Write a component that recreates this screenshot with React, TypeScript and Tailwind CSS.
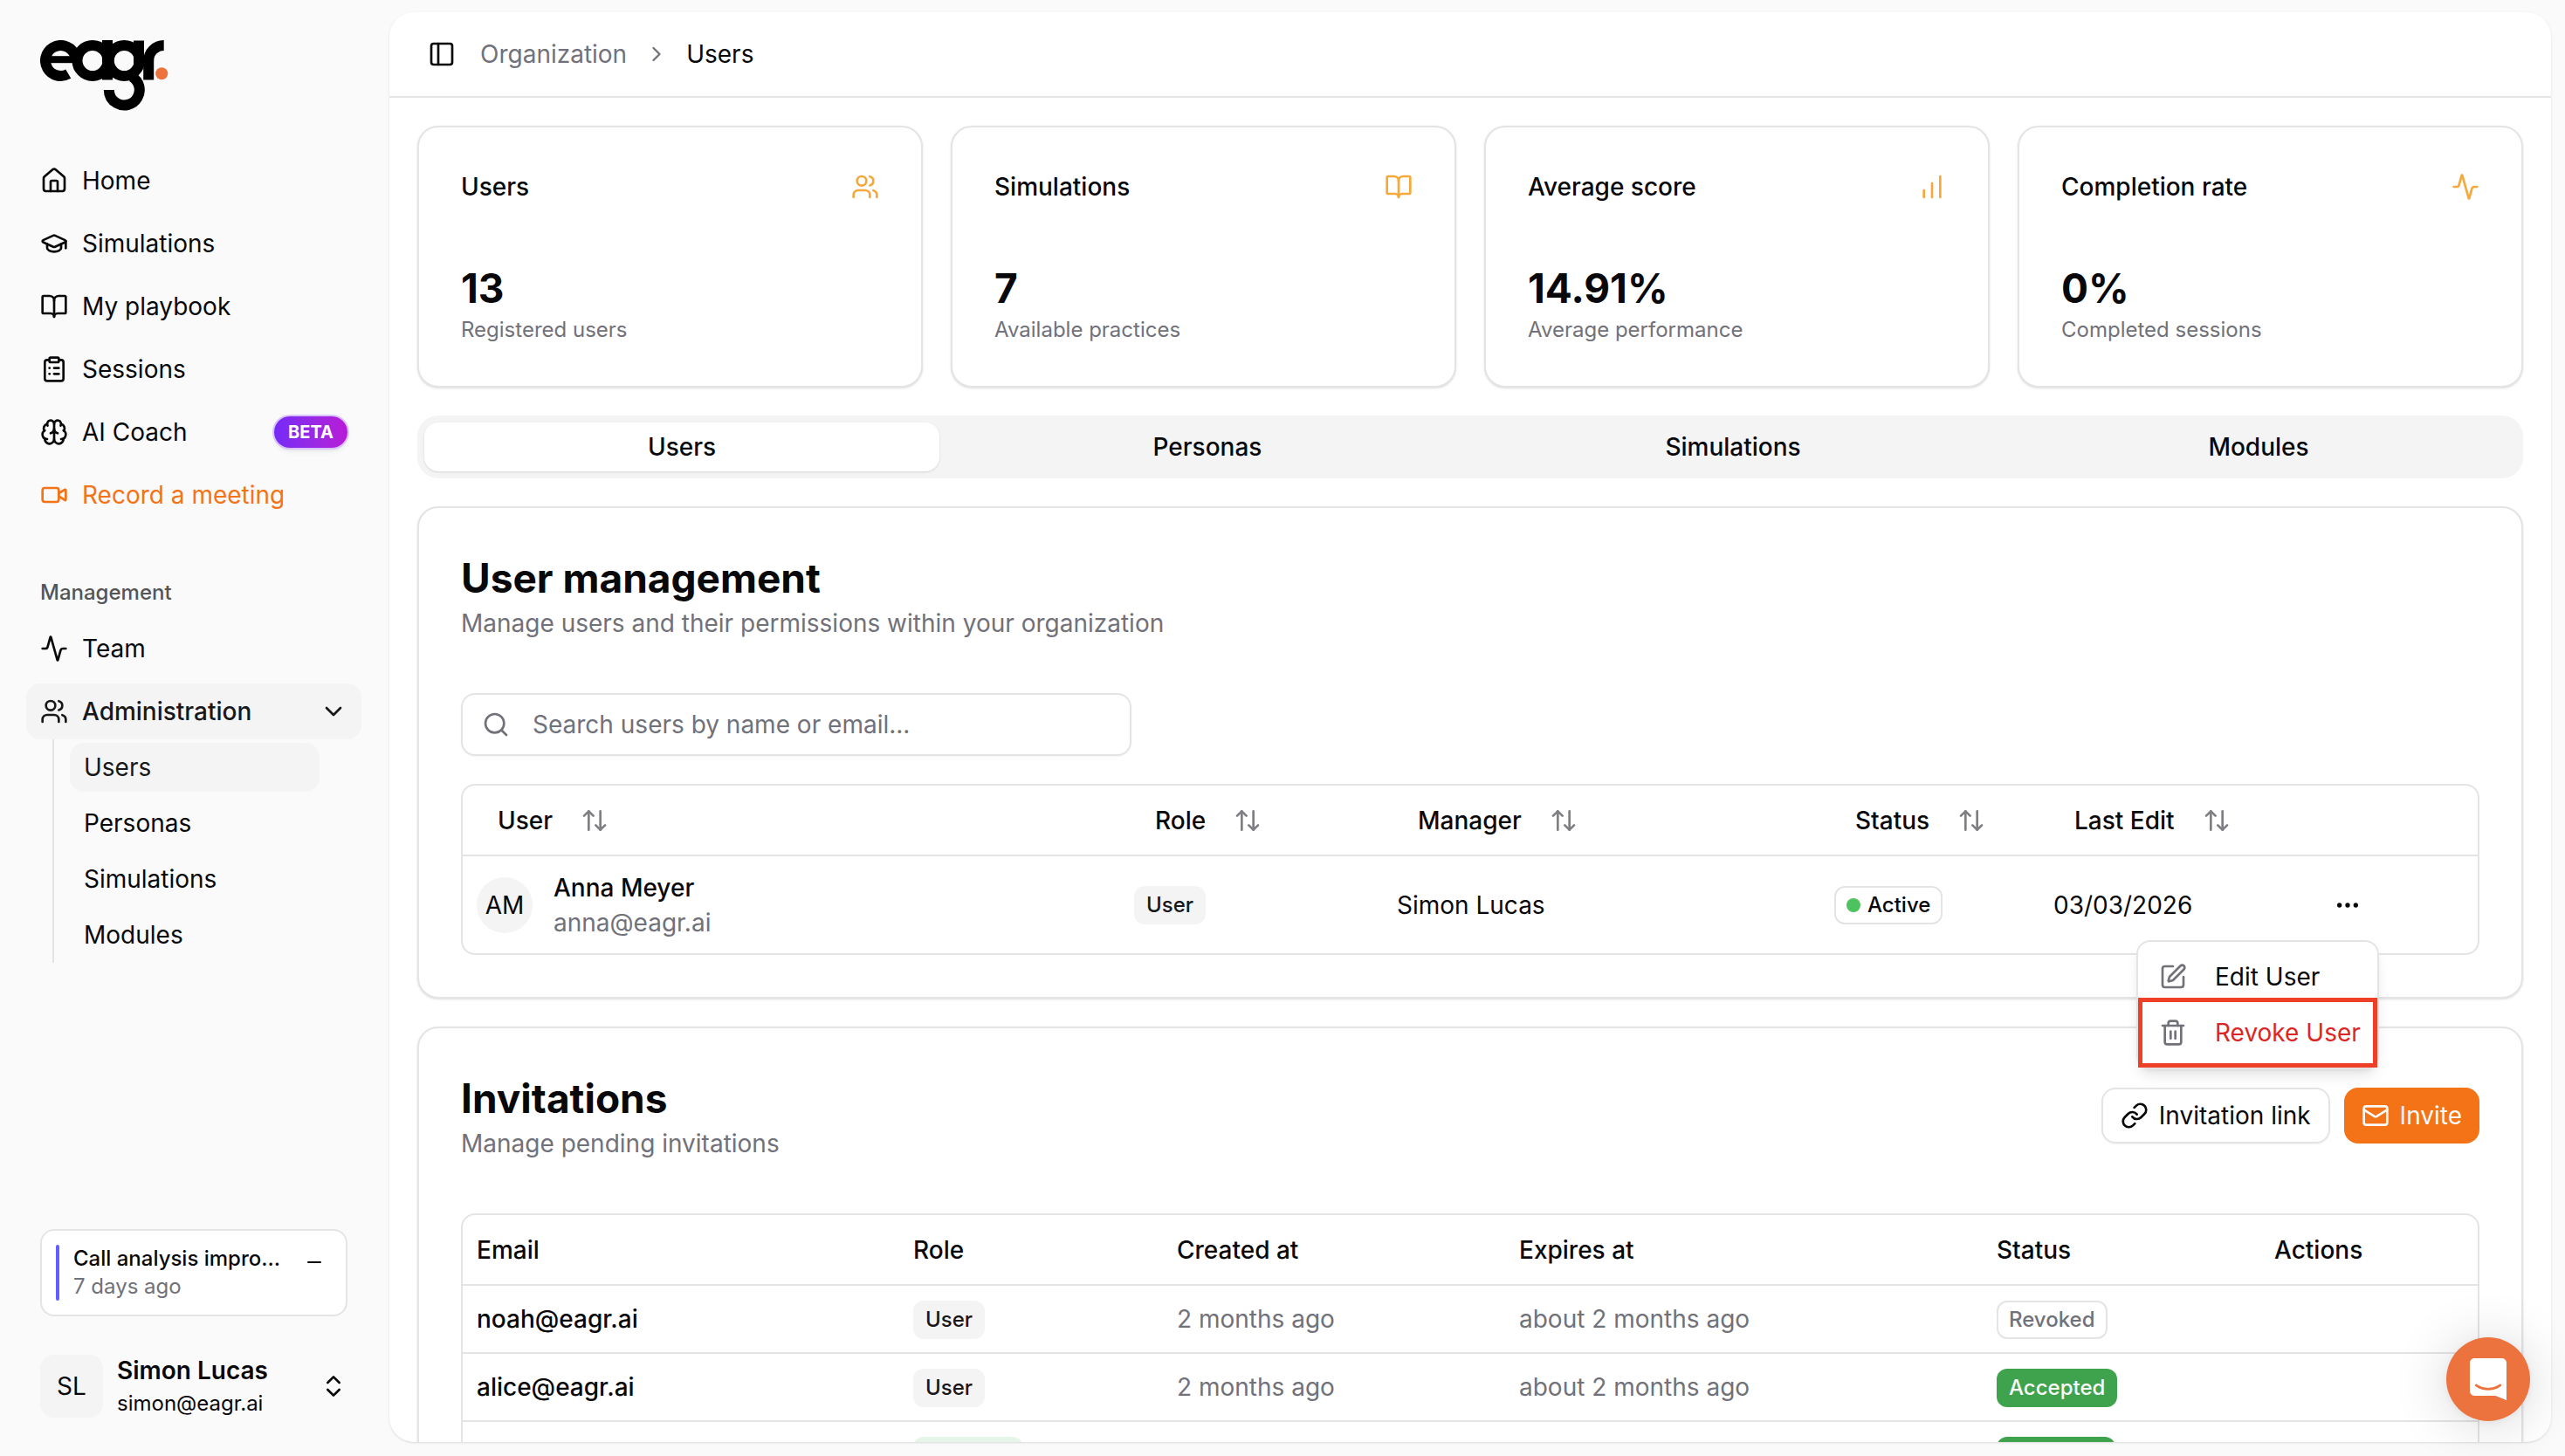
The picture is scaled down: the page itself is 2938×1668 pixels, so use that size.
import React from 'react';
import {
  Activity,
  ArrowUpDown,
  BookOpen,
  Brain,
  ChartNoAxesColumnIncreasing,
  ChevronDown,
  ChevronRight,
  ChevronsUpDown,
  ClipboardList,
  Ellipsis,
  GraduationCap,
  House,
  Link,
  Mail,
  Minus,
  PanelLeft,
  Search,
  SquarePen,
  Trash2,
  Users,
  Video,
  type LucideIcon,
} from 'lucide-react';

interface NavItem {
  label: string;
  icon: LucideIcon;
  badge?: string;
  highlight?: boolean;
}

interface Stat {
  label: string;
  value: string;
  hint: string;
  icon: LucideIcon;
}

interface Invitation {
  email: string;
  role: string;
  createdAt: string;
  expiresAt: string;
  status: 'Revoked' | 'Accepted';
}

const mainNav: NavItem[] = [
  { label: 'Home', icon: House },
  { label: 'Simulations', icon: GraduationCap },
  { label: 'My playbook', icon: BookOpen },
  { label: 'Sessions', icon: ClipboardList },
  { label: 'AI Coach', icon: Brain, badge: 'BETA' },
  { label: 'Record a meeting', icon: Video, highlight: true },
];

const adminNav = ['Users', 'Personas', 'Simulations', 'Modules'];

const stats: Stat[] = [
  { label: 'Users', value: '13', hint: 'Registered users', icon: Users },
  { label: 'Simulations', value: '7', hint: 'Available practices', icon: BookOpen },
  { label: 'Average score', value: '14.91%', hint: 'Average performance', icon: ChartNoAxesColumnIncreasing },
  { label: 'Completion rate', value: '0%', hint: 'Completed sessions', icon: Activity },
];

const tabs = ['Users', 'Personas', 'Simulations', 'Modules'];

const invitations: Invitation[] = [
  { email: 'noah@eagr.ai', role: 'User', createdAt: '2 months ago', expiresAt: 'about 2 months ago', status: 'Revoked' },
  { email: 'alice@eagr.ai', role: 'User', createdAt: '2 months ago', expiresAt: 'about 2 months ago', status: 'Accepted' },
];

/** Brand mark, built from rings and bars */
const Logo: React.FC = () => (
  <svg viewBox="46 46 147 81" className="h-[81px] w-[147px]" role="img" aria-label="eagr">
    <g fill="none" stroke="#000" strokeWidth="12">
      <circle cx="69.5" cy="69.5" r="17.5" pathLength="360" strokeDasharray="300 60" transform="rotate(60 69.5 69.5)" />
      <line x1="58" y1="68.2" x2="88" y2="68.2" strokeWidth="8" />
      <circle cx="106" cy="69.5" r="17.5" />
      <line x1="123" y1="46" x2="123" y2="91.5" />
      <circle cx="142.3" cy="69.5" r="17.5" />
      <line x1="159" y1="46.5" x2="159" y2="76" />
      <circle cx="142.3" cy="103" r="17.5" pathLength="360" strokeDasharray="240 120" transform="rotate(-60 142.3 103)" />
      <circle cx="187.7" cy="69.5" r="17.5" pathLength="360" strokeDasharray="90 270" transform="rotate(180 187.7 69.5)" />
      <line x1="170.2" y1="69" x2="170.2" y2="91.5" />
    </g>
    <circle cx="185.2" cy="84.2" r="7" fill="#ec733e" />
  </svg>
);

const Sidebar: React.FC = () => (
  <aside className="flex w-[446px] shrink-0 flex-col pr-8 pb-[26px] pl-[30px]">
    <div className="px-4 pt-[46px]">
      <Logo />
    </div>

    <nav className="mt-12 flex flex-col gap-2">
      {mainNav.map(({ label, icon: Icon, badge, highlight }) => (
        <a
          key={label}
          href="#"
          className={`flex h-16 items-center gap-4 rounded-2xl px-4 ${highlight ? 'text-[#f37316]' : ''}`}
        >
          <Icon size={32} />
          <span>{label}</span>
          {badge && (
            <span className="ml-auto flex h-9 items-center rounded-full bg-linear-to-r from-[#7529f6] to-[#b818d6] px-4 text-[20px] font-bold text-white shadow-md ring-2 ring-[#d9c2fa]">
              {badge}
            </span>
          )}
        </a>
      ))}
    </nav>

    <div className="mt-12 flex h-16 items-center px-4 text-2xl font-medium text-[#545456]">Management</div>
    <nav className="flex flex-col">
      <a href="#" className="mb-2 flex h-16 items-center gap-4 rounded-2xl px-4">
        <Activity size={32} />
        <span>Team</span>
      </a>
      <button type="button" className="flex h-16 items-center gap-4 rounded-2xl bg-[#f4f4f5] px-4 text-left font-medium text-[#18181b]">
        <Users size={32} />
        <span>Administration</span>
        <ChevronDown size={32} className="ml-auto" />
      </button>
      {/* Nested admin pages */}
      <div className="mr-12 ml-[30px] flex flex-col gap-2 border-l-2 border-[#e4e4e7] py-1 pl-[18px]">
        {adminNav.map((label, i) => (
          <a
            key={label}
            href="#"
            className={`flex h-14 items-center rounded-2xl px-4 ${i === 0 ? 'bg-[#f4f4f5] text-[#18181b]' : ''}`}
          >
            {label}
          </a>
        ))}
      </div>
    </nav>

    {/* What's new */}
    <div className="mx-4 mt-auto flex rounded-2xl border-2 border-[#e4e4e7] bg-white p-4">
      <div className="h-16 w-1 rounded-full bg-[#615fff]" />
      <div className="ml-4 flex-1 text-2xl leading-8">
        <div className="font-medium">Call analysis impro...</div>
        <div className="text-[#71717a]">7 days ago</div>
      </div>
      <button type="button" aria-label="Minimize" className="flex size-10 items-center justify-center">
        <Minus size={24} />
      </button>
    </div>

    <button type="button" className="mt-[26px] flex items-center gap-4 rounded-2xl p-4 text-left">
      <span className="flex size-[72px] items-center justify-center rounded-2xl bg-[#f4f4f5]">SL</span>
      <span className="flex flex-1 flex-col">
        <span className="leading-10 font-semibold">Simon Lucas</span>
        <span className="text-2xl leading-9">simon@eagr.ai</span>
      </span>
      <ChevronsUpDown size={32} />
    </button>
  </aside>
);

const StatCard: React.FC<Stat> = ({ label, value, hint, icon: Icon }) => (
  <div className="rounded-3xl border-2 border-[#e4e4e7] bg-white p-12 shadow">
    <div className="flex h-10 items-center justify-between">
      <span className="font-medium">{label}</span>
      <Icon size={32} className="text-[#f5a83c]" />
    </div>
    <div className="mt-16 flex h-16 items-center text-[46px] font-bold">{value}</div>
    <div className="text-2xl leading-8 text-[#71717a]">{hint}</div>
  </div>
);

const SortHeader: React.FC<{ label: string }> = ({ label }) => (
  <th className="h-20 px-4 text-left font-medium">
    <button type="button" className="flex items-center gap-8 px-6">
      {label}
      <ArrowUpDown size={32} className="text-[#7f7f83]" />
    </button>
  </th>
);

const RoleBadge: React.FC<{ role: string }> = ({ role }) => (
  <span className="inline-flex h-11 items-center rounded-xl bg-[#f4f4f5] px-3.5 align-middle text-2xl font-medium text-[#18181b]">
    {role}
  </span>
);

const UserMenu: React.FC = () => (
  <div className="absolute top-full -right-1 z-10 mt-2 w-[278px] rounded-2xl border-2 border-[#e4e4e7] bg-white p-2 shadow-lg">
    <button type="button" className="flex h-16 w-full items-center gap-8 px-4">
      <SquarePen size={32} className="shrink-0 text-[#71717a]" />
      Edit User
    </button>
    <button type="button" className="flex h-16 w-full items-center gap-8 px-4 whitespace-nowrap text-[#dc2626]">
      <Trash2 size={32} className="shrink-0 text-[#71717a]" />
      Revoke User
    </button>
    {/* Callout around the revoke action */}
    <div className="pointer-events-none absolute inset-x-0 bottom-0 h-20 border-[5px] border-[#ee4026]" />
  </div>
);

const UserManagement: React.FC = () => (
  <section className="rounded-3xl border-2 border-[#e4e4e7] bg-white p-12 shadow">
    <h2 className="text-[46px] leading-[64px] font-bold">User management</h2>
    <p className="leading-10 text-[#71717a]">Manage users and their permissions within your organization</p>

    <div className="mt-[60px] flex h-[72px] w-[768px] items-center gap-[26px] rounded-2xl border-2 border-[#e4e4e7] px-[22px] shadow-xs">
      <Search size={32} className="shrink-0 text-[#71717a]" />
      <input
        type="text"
        aria-label="Search users"
        placeholder="Search users by name or email..."
        className="w-full bg-transparent outline-none placeholder:text-[#71717a]"
      />
    </div>

    <div className="mt-8 rounded-2xl border-2 border-[#e4e4e7]">
      <table className="w-full table-fixed">
        <colgroup>
          <col className="w-[753px]" />
          <col className="w-[301px]" />
          <col className="w-[501px]" />
          <col className="w-[251px]" />
          <col className="w-[305px]" />
          <col className="w-[197px]" />
        </colgroup>
        <thead>
          <tr className="border-b-2 border-[#e4e4e7]">
            <SortHeader label="User" />
            <SortHeader label="Role" />
            <SortHeader label="Manager" />
            <SortHeader label="Status" />
            <SortHeader label="Last Edit" />
            <th aria-label="Actions" />
          </tr>
        </thead>
        <tbody>
          <tr className="h-28">
            <td className="px-4">
              <div className="flex items-center gap-6">
                <span className="flex size-16 items-center justify-center rounded-full bg-[#f4f4f5]">AM</span>
                <div className="leading-10">
                  <div className="font-medium">Anna Meyer</div>
                  <div className="text-[#71717a]">anna@eagr.ai</div>
                </div>
              </div>
            </td>
            <td className="px-4">
              <RoleBadge role="User" />
            </td>
            <td className="px-4">Simon Lucas</td>
            <td className="px-4">
              <span className="inline-flex h-11 items-center gap-2 rounded-xl border-2 border-[#e4e4e7] px-3 align-middle text-2xl font-medium">
                <span className="size-4 rounded-full bg-[#4cc35f]" />
                Active
              </span>
            </td>
            <td className="px-4">03/03/2026</td>
            <td className="px-4">
              <div className="relative w-16">
                <button type="button" aria-label="Open menu" className="flex size-16 items-center justify-center">
                  <Ellipsis size={32} />
                </button>
                <UserMenu />
              </div>
            </td>
          </tr>
        </tbody>
      </table>
    </div>
  </section>
);

const Invitations: React.FC = () => (
  <section className="rounded-3xl border-2 border-[#e4e4e7] bg-white p-12 shadow">
    <div className="flex items-center justify-between">
      <div>
        <h2 className="text-[46px] leading-[64px] font-bold">Invitations</h2>
        <p className="leading-10 text-[#71717a]">Manage pending invitations</p>
      </div>
      <div className="flex gap-4">
        <button type="button" className="flex h-16 items-center gap-3 rounded-2xl border-2 border-[#e4e4e7] px-5 shadow-xs">
          <Link size={32} />
          Invitation link
        </button>
        <button type="button" className="flex h-16 items-center gap-3 rounded-2xl bg-[#f37316] px-5 text-[#fafafa]">
          <Mail size={32} />
          Invite
        </button>
      </div>
    </div>

    <div className="mt-[60px] rounded-2xl border-2 border-[#e4e4e7]">
      <table className="w-full table-fixed">
        <colgroup>
          <col className="w-[500px]" />
          <col className="w-[302px]" />
          <col className="w-[392px]" />
          <col className="w-[547px]" />
          <col className="w-[318px]" />
          <col className="w-[249px]" />
        </colgroup>
        <thead>
          <tr className="h-20 border-b-2 border-[#e4e4e7] text-left">
            {['Email', 'Role', 'Created at', 'Expires at', 'Status', 'Actions'].map((heading) => (
              <th key={heading} className="px-4 font-medium">
                {heading}
              </th>
            ))}
          </tr>
        </thead>
        <tbody>
          {invitations.map((inv) => (
            <tr key={inv.email} className="h-[78px] border-b-2 border-[#e4e4e7]">
              <td className="px-4 font-medium">{inv.email}</td>
              <td className="px-4">
                <RoleBadge role={inv.role} />
              </td>
              <td className="px-4 text-[#71717a]">{inv.createdAt}</td>
              <td className="px-4 text-[#71717a]">{inv.expiresAt}</td>
              <td className="px-4">
                {inv.status === 'Revoked' ? (
                  <span className="inline-flex h-11 items-center rounded-xl border-2 border-[#e4e4e7] px-3 align-middle text-2xl font-medium text-[#71717a]">
                    Revoked
                  </span>
                ) : (
                  <span className="inline-flex h-11 items-center rounded-xl bg-[#3fa34d] px-3.5 align-middle text-2xl font-medium text-[#fafafa]">
                    Accepted
                  </span>
                )}
              </td>
              <td className="px-4" />
            </tr>
          ))}
          {/* Next row is only partly scrolled into view */}
          <tr className="h-[78px]">
            <td className="px-4" />
            <td className="px-4">
              <span className="block h-11 w-[126px] rounded-xl bg-[#e5f6e8]" />
            </td>
            <td className="px-4" />
            <td className="px-4" />
            <td className="px-4">
              <span className="block h-11 w-[136px] rounded-xl bg-[#3fa34d]" />
            </td>
            <td className="px-4" />
          </tr>
        </tbody>
      </table>
    </div>
  </section>
);

export default function App() {
  return (
    <div className="flex h-screen overflow-hidden bg-[#fafafa] font-[Inter,'Liberation_Sans',sans-serif] text-[28px] text-[#09090b]">
      <Sidebar />

      <main className="mt-3.5 mr-4 mb-4 flex min-w-0 flex-1 flex-col overflow-hidden rounded-[28px] bg-white shadow">
        <header className="flex h-[98px] shrink-0 items-center border-b-2 border-[#e4e4e7] px-11">
          <button type="button" aria-label="Toggle sidebar">
            <PanelLeft size={32} />
          </button>
          <nav aria-label="Breadcrumb" className="ml-7 flex items-center gap-5">
            <a href="#" className="text-[#71717a]">
              Organization
            </a>
            <ChevronRight size={28} className="text-[#71717a]" />
            <span>Users</span>
          </nav>
        </header>

        <div className="flex min-h-0 flex-1 flex-col gap-8 overflow-hidden p-8 *:shrink-0">
          <div className="grid grid-cols-4 gap-8">
            {stats.map((stat) => (
              <StatCard key={stat.label} {...stat} />
            ))}
          </div>

          <div role="tablist" className="grid grid-cols-4 gap-3 rounded-3xl bg-[#f4f4f5] p-2">
            {tabs.map((tab, i) => (
              <button
                key={tab}
                type="button"
                role="tab"
                aria-selected={i === 0}
                className={`h-14 rounded-2xl font-medium ${i === 0 ? 'bg-white shadow' : ''}`}
              >
                {tab}
              </button>
            ))}
          </div>

          <UserManagement />
          <Invitations />
        </div>
      </main>

      {/* Support chat launcher */}
      <button
        type="button"
        aria-label="Open chat"
        className="fixed right-10 bottom-10 flex size-24 items-center justify-center rounded-full bg-[#ec733e] shadow-[0_2px_12px_rgba(0,0,0,0.06),0_4px_64px_rgba(0,0,0,0.16)]"
      >
        <svg viewBox="0 0 28 32" className="h-12 w-[42px]" fill="#fff" aria-hidden="true">
          <path d="M28 32s-4.714-1.855-8.527-3.34H3.437C1.54 28.66 0 27.026 0 25.013V3.644C0 1.633 1.54 0 3.437 0h21.125c1.898 0 3.437 1.632 3.437 3.645v18.404H28V32zm-4.139-11.982a.88.88 0 00-1.292-.105c-.03.026-3.015 2.681-8.57 2.681-5.486 0-8.517-2.636-8.571-2.684a.88.88 0 00-1.29.107 1.01 1.01 0 00-.219.708.992.992 0 00.318.664c.142.128 3.537 3.15 9.762 3.15 6.226 0 9.621-3.022 9.763-3.15a.992.992 0 00.317-.664 1.01 1.01 0 00-.218-.707z" />
        </svg>
      </button>
    </div>
  );
}
